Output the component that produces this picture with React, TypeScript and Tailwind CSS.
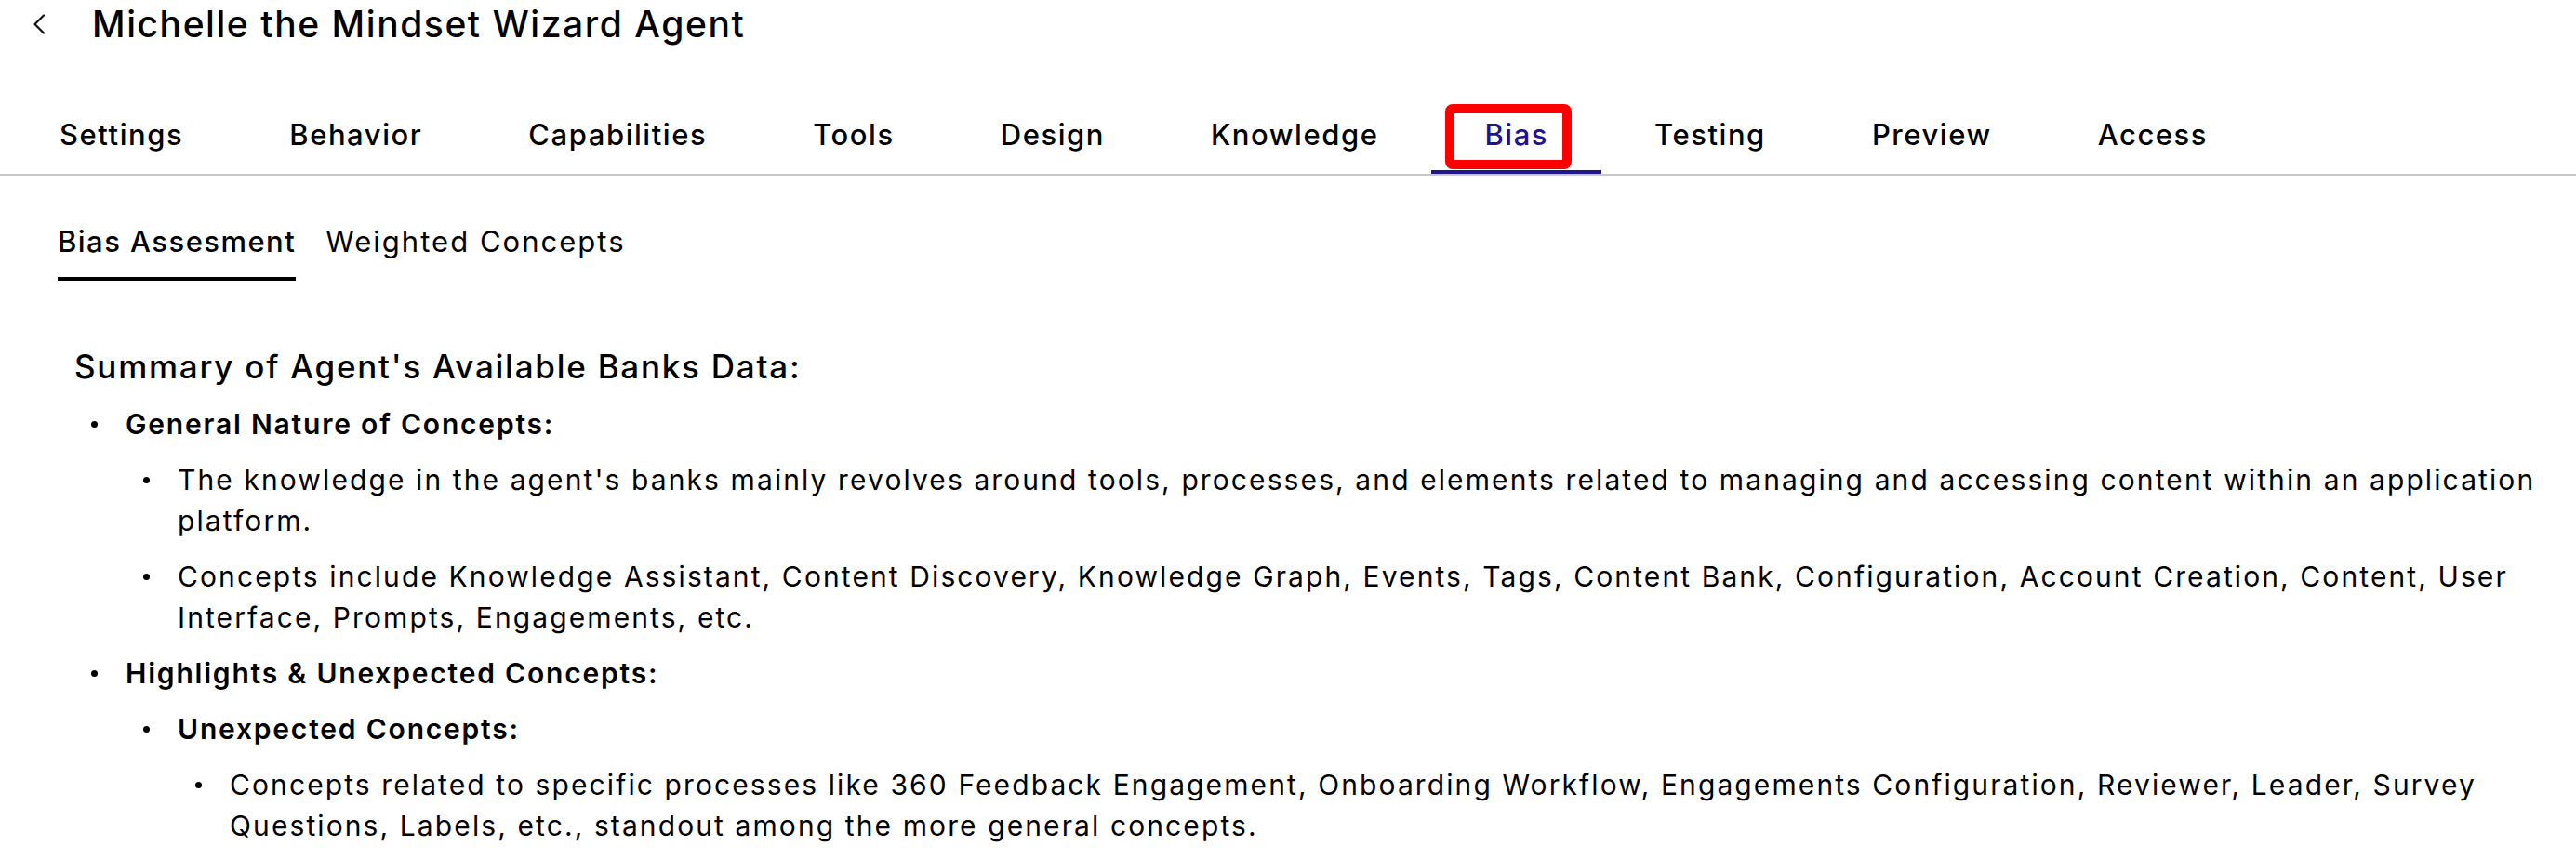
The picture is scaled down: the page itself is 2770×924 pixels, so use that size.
import React from "react";

const tabs = [
  "Settings",
  "Behavior",
  "Capabilities",
  "Tools",
  "Design",
  "Knowledge",
  "Bias",
  "Testing",
  "Preview",
  "Access",
];

function Dot() {
  return (
    <span className="flex h-[44px] w-[56px] shrink-0 items-center">
      <span className="ml-[19px] h-[7px] w-[7px] rounded-full bg-black" />
    </span>
  );
}

function Item({
  label,
  bold,
  children,
}: {
  label: string;
  bold?: boolean;
  children?: React.ReactNode;
}) {
  return (
    <li className="flex">
      <Dot />
      <div className="min-w-0 flex-1">
        <div
          className={
            bold
              ? "text-[30px] leading-[44px] font-semibold tracking-[0.06em]"
              : "text-[30px] leading-[44px] font-normal tracking-[0.07em]"
          }
        >
          {label}
        </div>
        {children && (
          <ul className="mt-[16px] flex flex-col gap-[16px]">{children}</ul>
        )}
      </div>
    </li>
  );
}

export default function App() {
  return (
    <div className="min-h-[924px] w-full bg-white font-['Inter',sans-serif] text-black">
      <header className="flex h-[52px] items-center">
        <button className="ml-[34px] flex h-[24px] w-[16px] items-center justify-center">
          <svg width="14" height="22" viewBox="0 0 14 22" fill="none">
            <path
              d="M12 1.5 2.5 11 12 20.5"
              stroke="#111"
              strokeWidth="2.2"
              strokeLinecap="round"
              strokeLinejoin="round"
            />
          </svg>
        </button>
        <h1 className="ml-[49px] text-[39px] font-medium tracking-[0.04em]">
          Michelle the Mindset Wizard Agent
        </h1>
      </header>

      <nav className="mt-[51px] flex border-b-2 border-[#c8c8c8] pl-[7px]">
        {tabs.map((t) => {
          const active = t === "Bias";
          return (
            <div
              key={t}
              className={
                active
                  ? "relative flex h-[84px] items-center px-[57px] text-[31px] font-medium tracking-[0.05em] text-[#1e148f]"
                  : "relative flex h-[84px] items-center px-[57px] text-[31px] font-medium tracking-[0.05em]"
              }
            >
              {t}
              {active && (
                <>
                  <span className="absolute inset-x-0 bottom-0 h-[4px] bg-[#22168e]" />
                  <span className="absolute top-[9px] bottom-[5px] left-[15px] right-[32px] rounded-[8px] border-[10px] border-[#ff0000]" />
                </>
              )}
            </div>
          );
        })}
      </nav>

      <div className="mt-[51px] ml-[62px] flex gap-[32px]">
        <div className="flex flex-col">
          <span className="text-[31px] leading-[40px] font-medium tracking-[0.047em]">
            Bias Assesment
          </span>
          <span className="mt-[18px] h-[4px] bg-black" />
        </div>
        <div className="flex flex-col">
          <span className="text-[31px] leading-[40px] font-normal tracking-[0.065em]">
            Weighted Concepts
          </span>
        </div>
      </div>

      <main className="pr-[6px]">
        <h2 className="mt-[68px] ml-[80px] text-[35px] leading-[48px] font-medium tracking-[0.05em]">
          Summary of Agent's Available Banks Data:
        </h2>
        <ul className="mt-[16px] ml-[79px] flex flex-col gap-[16px]">
          <Item label="General Nature of Concepts:" bold>
            <Item label="The knowledge in the agent's banks mainly revolves around tools, processes, and elements related to managing and accessing content within an application platform." />
            <Item label="Concepts include Knowledge Assistant, Content Discovery, Knowledge Graph, Events, Tags, Content Bank, Configuration, Account Creation, Content, User Interface, Prompts, Engagements, etc." />
          </Item>
          <Item label="Highlights & Unexpected Concepts:" bold>
            <Item label="Unexpected Concepts:" bold>
              <Item label="Concepts related to specific processes like 360 Feedback Engagement, Onboarding Workflow, Engagements Configuration, Reviewer, Leader, Survey Questions, Labels, etc., standout among the more general concepts." />
            </Item>
          </Item>
        </ul>
      </main>
    </div>
  );
}
